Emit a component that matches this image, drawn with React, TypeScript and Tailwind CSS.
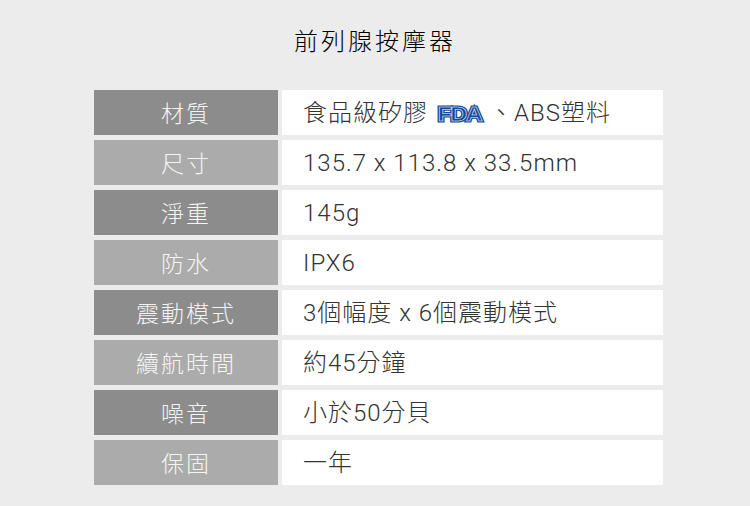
import React from 'react';

const rows: { label: string; value: React.ReactNode }[] = [
  {
    label: '材質',
    value: (
      <>
        食品級矽膠
        <FdaLogo />
        、ABS塑料
      </>
    ),
  },
  { label: '尺寸', value: '135.7 x 113.8 x 33.5mm' },
  { label: '淨重', value: '145g' },
  { label: '防水', value: 'IPX6' },
  { label: '震動模式', value: '3個幅度 x 6個震動模式' },
  { label: '續航時間', value: '約45分鐘' },
  { label: '噪音', value: '小於50分貝' },
  { label: '保固', value: '一年' },
];

// FDA mark: blue letters with a thin white inner line
function FdaLogo() {
  const common = {
    x: 1.5,
    y: 19,
    fontFamily: "'Liberation Sans', Arial, sans-serif",
    fontWeight: 700,
    fontSize: 21,
    letterSpacing: -1.5,
  } as const;
  return (
    <svg width="50" height="22" viewBox="0 0 50 22" overflow="visible" className="ml-[8px] mr-[3px] shrink-0">
      <g transform="scale(1.12,1)">
        <text {...common} fill="#184a9a" stroke="#184a9a" strokeWidth="3.2">
          FDA
        </text>
        <text {...common} fill="none" stroke="#ffffff" strokeWidth="0.5">
          FDA
        </text>
      </g>
    </svg>
  );
}

export default function App() {
  return (
    <div
      className="w-full h-[506px] bg-[#ececec] overflow-hidden"
      style={{ fontFamily: "'Noto Sans CJK TC', 'Noto Sans', sans-serif" }}
    >
      {/* Title */}
      <h1 className="pt-[22px] h-[90px] text-center text-[24px] font-light leading-[36px] tracking-[3px] text-[#000]">
        前列腺按摩器
      </h1>

      {/* Spec table */}
      <div className="ml-[94px] w-[569px] flex flex-col gap-[5px]">
        {rows.map((row, i) => (
          <div key={row.label} className="flex h-[45px] gap-[4px]">
            <div
              className={`w-[184px] flex items-center justify-center text-[23px] font-light tracking-[2px] text-[#f4f4f4] ${
                i % 2 === 0 ? 'bg-[#8c8c8c]' : 'bg-[#ababab]'
              }`}
            >
              {row.label}
            </div>
            <div
              className="flex-1 bg-white flex items-center pl-[21px] text-[24px] font-light tracking-[1px] text-[#333]"
              style={{ fontFamily: "Roboto, 'Noto Sans CJK TC', sans-serif" }}
            >
              {row.value}
            </div>
          </div>
        ))}
      </div>
    </div>
  );
}
